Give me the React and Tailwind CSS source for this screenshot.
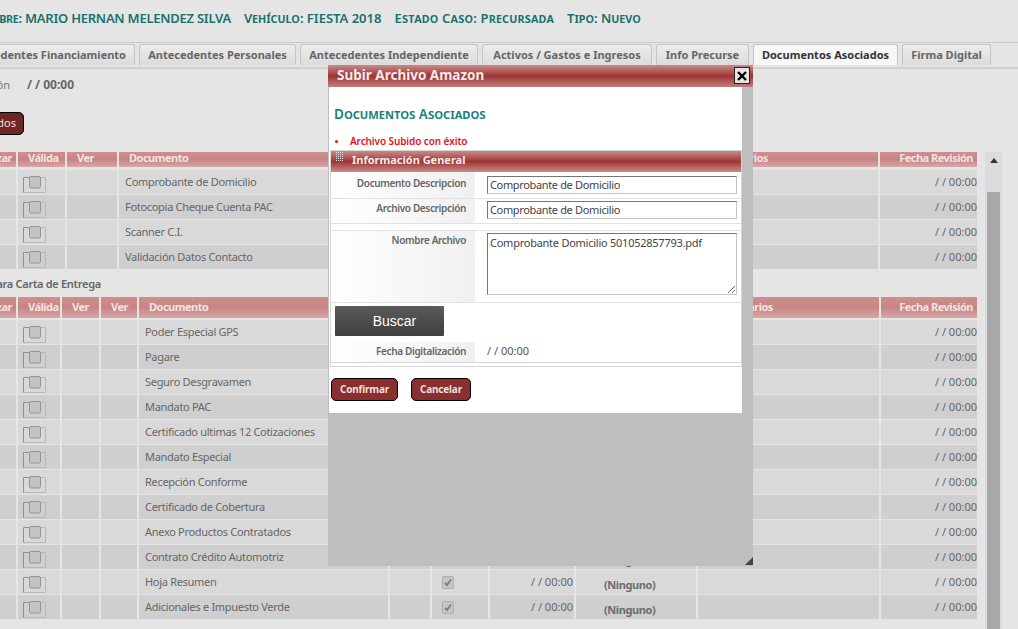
const Check = () => (
  <svg width="12" height="13" viewBox="0 0 12 13" className="block">
    <rect x="0.5" y="0.5" width="11" height="12" rx="1.5" fill="#c6c6c6" stroke="#adadad" />
    <path d="M3 7 L5 9 L9 3.5" fill="none" stroke="#7d7d7d" strokeWidth="1.8" />
  </svg>
);

// the odd box-like icon in the "Valida" column
const BoxIcon = () => (
  <svg width="23" height="17" viewBox="0 0 23 17" className="block">
    <path d="M0.5 16.5 H22.5 V1.5 H0.5" fill="none" stroke="#b8b8b8" />
    <path d="M0.5 16.5 V1.5 H6" fill="none" stroke="#8f8f8f" />
    <rect x="6.5" y="0.5" width="11" height="11.5" rx="1.5" fill="#c3c3c3" stroke="#949494" />
  </svg>
);

const GripDots = () => (
  <svg width="8" height="10" viewBox="0 0 8 10" className="block ml-[5px] mr-[8px] -mt-[8px]">
    {[0, 2, 4, 6, 8].map((y) =>
      [0, 2, 4, 6].map((x) => <rect key={`${x}-${y}`} x={x} y={y} width="1" height="1" fill="#f0dcdc" />)
    )}
  </svg>
);

const rowsTop = [
  "Comprobante de Domicilio",
  "Fotocopia Cheque Cuenta PAC",
  "Scanner C.I.",
  "Validación Datos Contacto",
];

const rowsBottom = [
  "Poder Especial GPS",
  "Pagare",
  "Seguro Desgravamen",
  "Mandato PAC",
  "Certificado ultimas 12 Cotizaciones",
  "Mandato Especial",
  "Recepción Conforme",
  "Certificado de Cobertura",
  "Anexo Productos Contratados",
  "Contrato Crédito Automotriz",
  "Hoja Resumen",
  "Adicionales e Impuesto Verde",
];

const tabs = [
  { label: "Antecedentes Financiamiento", w: "w-[226px] -ml-[91px] justify-end pr-[8px]" },
  { label: "Antecedentes Personales", w: "w-[157px] justify-center" },
  { label: "Antecedentes Independiente", w: "w-[178px] justify-center" },
  { label: "Activos / Gastos e Ingresos", w: "w-[170px] justify-center" },
  { label: "Info Precurse", w: "w-[93px] justify-center" },
  { label: "Documentos Asociados", w: "w-[145px] justify-center", active: true },
  { label: "Firma Digital", w: "w-[89px] justify-center" },
];

const HeadCell = ({ children, right, pb }) => (
  <div
    className={`flex items-center overflow-hidden whitespace-nowrap tracking-[-0.5px] bg-gradient-to-b from-[#cf8f8f] via-[#c88484] to-[#d8a8a8] ${pb} ${
      right ? "justify-end pr-[4px]" : "pl-[10px]"
    }`}
  >
    {children}
  </div>
);

const Table = ({ cols, head, rows, headH, headPb, extraVer }) => (
  <div className="flex flex-col gap-[1px] w-[977px] text-[11px] text-[#666]">
    <div className={`grid gap-x-[2px] ${cols} ${headH} font-bold text-[#f3e3e3]`}>
      {head.map((h, i) => (
        <HeadCell key={i} right={h.right} pb={headPb}>
          {h.t}
        </HeadCell>
      ))}
    </div>
    {rows.map((r, i) => {
      const bg = i % 2 === 0 ? "bg-[#d9d9d9]" : "bg-[#cfcfcf]";
      return (
        <div key={r} className={`grid gap-x-[2px] ${cols} h-[24px]`}>
          <div className={bg} />
          <div className={`pl-[5px] pt-[6px] ${bg}`}>
            <BoxIcon />
          </div>
          {extraVer && <div className={bg} />}
          <div className={bg} />
          <div className={`flex items-center pl-[6px] tracking-[-0.3px] whitespace-nowrap overflow-hidden ${bg}`}>{r}</div>
          <div className={bg} />
          <div className={`flex items-center pl-[10px] ${bg}`}>
            <Check />
          </div>
          <div className={`flex items-center justify-end pr-[1px] whitespace-nowrap ${bg}`}>/ / 00:00</div>
          <div className={`flex items-end pb-[1px] pl-[28px] font-bold tracking-[-0.4px] text-[#6c6c6c] ${bg}`}>(Ninguno)</div>
          <div className={bg} />
          <div className={`flex items-center justify-end whitespace-nowrap ${bg}`}>/ / 00:00</div>
        </div>
      );
    })}
  </div>
);

const FormLabel = ({ children, pad }) => (
  <div
    className={`w-[144px] shrink-0 pr-[9px] text-right text-[10px] font-semibold tracking-[-0.35px] text-[#666] whitespace-nowrap bg-gradient-to-r from-white to-[#f0f0f0] ${pad}`}
  >
    {children}
  </div>
);

const FormRow = ({ label, children, className, labelPad, fieldPad }) => (
  <div className={`flex border-b border-[#e2e2e2] ${className}`}>
    <FormLabel pad={labelPad}>{label}</FormLabel>
    <div className={`flex-1 pl-[12px] pr-[4px] ${fieldPad}`}>{children}</div>
  </div>
);

const Field = ({ value }) => (
  <div className="h-[18px] border border-[#c4c4c4] border-t-[#777] border-l-[#777] px-[2px] leading-[16px] text-[11px] tracking-[-0.35px] text-[#444] bg-white">
    {value}
  </div>
);

const RedButton = ({ children, className }) => (
  <div
    className={`flex items-center justify-center h-[23px] rounded-[5px] border border-black bg-[#8a2f30] font-bold text-[#f2dede] text-[10px] tracking-[-0.2px] ${className}`}
  >
    {children}
  </div>
);

const Modal = () => (
  <div className="absolute left-[328px] top-[65px] w-[425px] h-[501px] bg-[#bebebe]">
    <div className="relative h-[22px] bg-gradient-to-b from-[#c98a8a] via-[#9c3433] to-[#c27e7e] pl-[9px] leading-[21px] text-[13.5px] font-bold text-[#f5e9e9]">
      Subir Archivo Amazon
      <div className="absolute right-[3px] top-[2px] w-[16px] h-[17px] flex items-center justify-center bg-[#e4e4e4] border border-[#222]">
        <svg width="12" height="12" viewBox="0 0 12 12">
          <path d="M2 2 L10 10 M10 2 L2 10" stroke="#000" strokeWidth="2.4" />
        </svg>
      </div>
    </div>
    <div className="ml-[1px] w-[413px] h-[326px] bg-white pt-[19px] text-[11px]">
      <div className="pl-[5px] text-[13.5px] leading-[16px] font-semibold text-[#17807a] [font-variant:small-caps]">
        Documentos Asociados
      </div>
      <div className="flex items-center pl-[6px] mt-[12px] h-[14px] text-[10px] tracking-[-0.1px] text-[#e8101c] font-semibold">
        <span className="w-[3px] h-[3px] rounded-full bg-[#e8101c] mr-[12px]" />
        Archivo Subido con éxito
      </div>
      <div className="ml-[1px] w-[412px] mt-[2px] border border-[#d5d5d5]">
        <div className="flex items-center h-[21px] pb-[2px] bg-gradient-to-b from-[#c98a8a] via-[#9c3433] to-[#c88a8a] text-[#f5e9e9] font-bold text-[11px]">
          <GripDots />
          Información General
        </div>
        <FormRow
          label="Documento Descripcion"
          className="h-[27px]"
          labelPad="pt-[4px]"
          fieldPad="pt-[4px]"
        >
          <Field value="Comprobante de Domicilio" />
        </FormRow>
        <FormRow
          label="Archivo Descripción"
          className="h-[25px]"
          labelPad="pt-[2px]"
          fieldPad="pt-[2px]"
        >
          <Field value="Comprobante de Domicilio" />
        </FormRow>
        <div className="h-[7px] border-b border-[#e2e2e2]" />
        <FormRow label="Nombre Archivo" className="h-[72px]" labelPad="pt-[2px]" fieldPad="pt-[2px]">
          <div className="relative h-[62px] border border-[#c4c4c4] border-t-[#777] border-l-[#777] px-[2px] pt-[1px] leading-[16px] tracking-[-0.25px] text-[#444]">
            Comprobante Domicilio 501052857793.pdf
            <svg width="10" height="10" viewBox="0 0 10 10" className="absolute right-0 bottom-0">
              <path d="M2 9 L9 2 M6 9 L9 6" stroke="#666" />
            </svg>
          </div>
        </FormRow>
        <div className="pt-[3px] pl-[4px]">
          <div className="flex items-center justify-center w-[109px] h-[30px] pl-[10px] rounded-[1px] bg-gradient-to-b from-[#5a5a5a] to-[#3f3f3f] text-white text-[14px] font-['Liberation_Sans',sans-serif]">
            Buscar
          </div>
        </div>
        <div className="flex h-[21px] mt-[6px] border-b border-[#d5d5d5] mb-[3px]">
          <FormLabel pad="pt-[2px]">Fecha Digitalización</FormLabel>
          <div className="pl-[12px] pt-[1px] text-[#555]">/ / 00:00</div>
        </div>
      </div>
      <div className="flex gap-[13px] mt-[11px] ml-[2px]">
        <RedButton className="w-[67px]">Confirmar</RedButton>
        <RedButton className="w-[60px]">Cancelar</RedButton>
      </div>
    </div>
    <svg width="9" height="8" viewBox="0 0 9 8" className="absolute right-0 bottom-[1px]">
      <path d="M1 8 L9 0 V8 Z" fill="#444" />
    </svg>
  </div>
);

export default function App() {
  const headTop = [
    { t: "Rechazar", right: true },
    { t: "Válida" },
    { t: "Ver" },
    { t: "Documento" },
    { t: "" },
    { t: "" },
    { t: "" },
    { t: "" },
    { t: "Comentarios" },
    { t: "Fecha Revisión", right: true },
  ];
  const headBottom = [
    { t: "Rechazar", right: true },
    { t: "Válida" },
    { t: "Ver" },
    { t: "Ver" },
    { t: "Documento" },
    { t: "" },
    { t: "" },
    { t: "" },
    { t: "" },
    { t: "Comentarios" },
    { t: "Fecha Revisión", right: true },
  ];
  return (
    <div className="relative w-[1018px] h-[629px] overflow-hidden bg-[#e5e5e5] text-[11px] font-['Noto_Sans',sans-serif]">
      {/* barra superior del caso */}
      <div className="h-[43px] border-b border-[#c9c9c9] flex items-center whitespace-nowrap text-[13px] font-semibold text-[#17716d] [font-variant:small-caps] -ml-[29px] gap-[13px] pb-[5px]">
        <span className="tracking-[-0.25px]">Nombre: MARIO HERNAN MELENDEZ SILVA</span>
        <span>Vehículo: FIESTA 2018</span>
        <span className="tracking-[0.2px]">Estado Caso: Precursada</span>
        <span>Tipo: Nuevo</span>
      </div>

      <div className="h-[26px] border-b-2 border-[#d0d0d0] pt-[1px] flex gap-[4px] whitespace-nowrap">
        {tabs.map((t) => (
          <div
            key={t.label}
            className={`${t.w} shrink-0 h-[21px] rounded-t-[3px] border border-b-0 border-[#c4c4c4] flex items-center font-bold ${
              t.active ? "bg-[#f7f7f7] text-[#333]" : "bg-gradient-to-b from-[#ececec] to-[#dcdcdc] text-[#666]"
            }`}
          >
            {t.label}
          </div>
        ))}
      </div>

      <div className="flex items-center h-[18px] mt-[7px] -ml-[55px] gap-[17px]">
        <span className="w-[65px] text-right text-[#777]">Revisión</span>
        <span className="font-bold text-[12px] text-[#666]">/ / 00:00</span>
      </div>

      <div className="mt-[18px] -ml-[60px] w-[84px] h-[23px] flex items-center justify-end pr-[7px] rounded-[5px] border border-black bg-[#6d2526] text-[#f2dede]">
        Rechazados
      </div>

      <div className="relative">
        <div className="pt-[17px]">
          <Table
            cols="grid-cols-[16px_47px_50px_270px_40px_56px_84px_114px_185px_97px]"
            head={headTop}
            rows={rowsTop}
            headH="h-[15px] mb-[2px]"
            headPb="pb-[2px]"
          />
        </div>
        <div className="h-[28px] flex items-end -ml-[10px] font-semibold tracking-[-0.3px] text-[#666] pb-[5px]">
          Para Carta de Entrega
        </div>
        <Table
          cols="grid-cols-[16px_42px_37px_36px_249px_40px_56px_84px_120px_181px_96px]"
          head={headBottom}
          rows={rowsBottom}
          headH="h-[21px] mb-[1px]"
          extraVer
        />
        {/* scrollbar */}
        <div className="absolute left-[985px] top-[17px] w-[17px] h-[480px] bg-[#dcdcdc] flex flex-col items-center">
          <svg width="8" height="5" viewBox="0 0 8 5" className="mt-[6px]">
            <path d="M0 5 L4 0 L8 5 Z" fill="#333" />
          </svg>
          <div className="w-[13px] flex-1 mt-[29px] bg-[#a8a8a8]" />
        </div>
      </div>

      <Modal />
    </div>
  );
}
